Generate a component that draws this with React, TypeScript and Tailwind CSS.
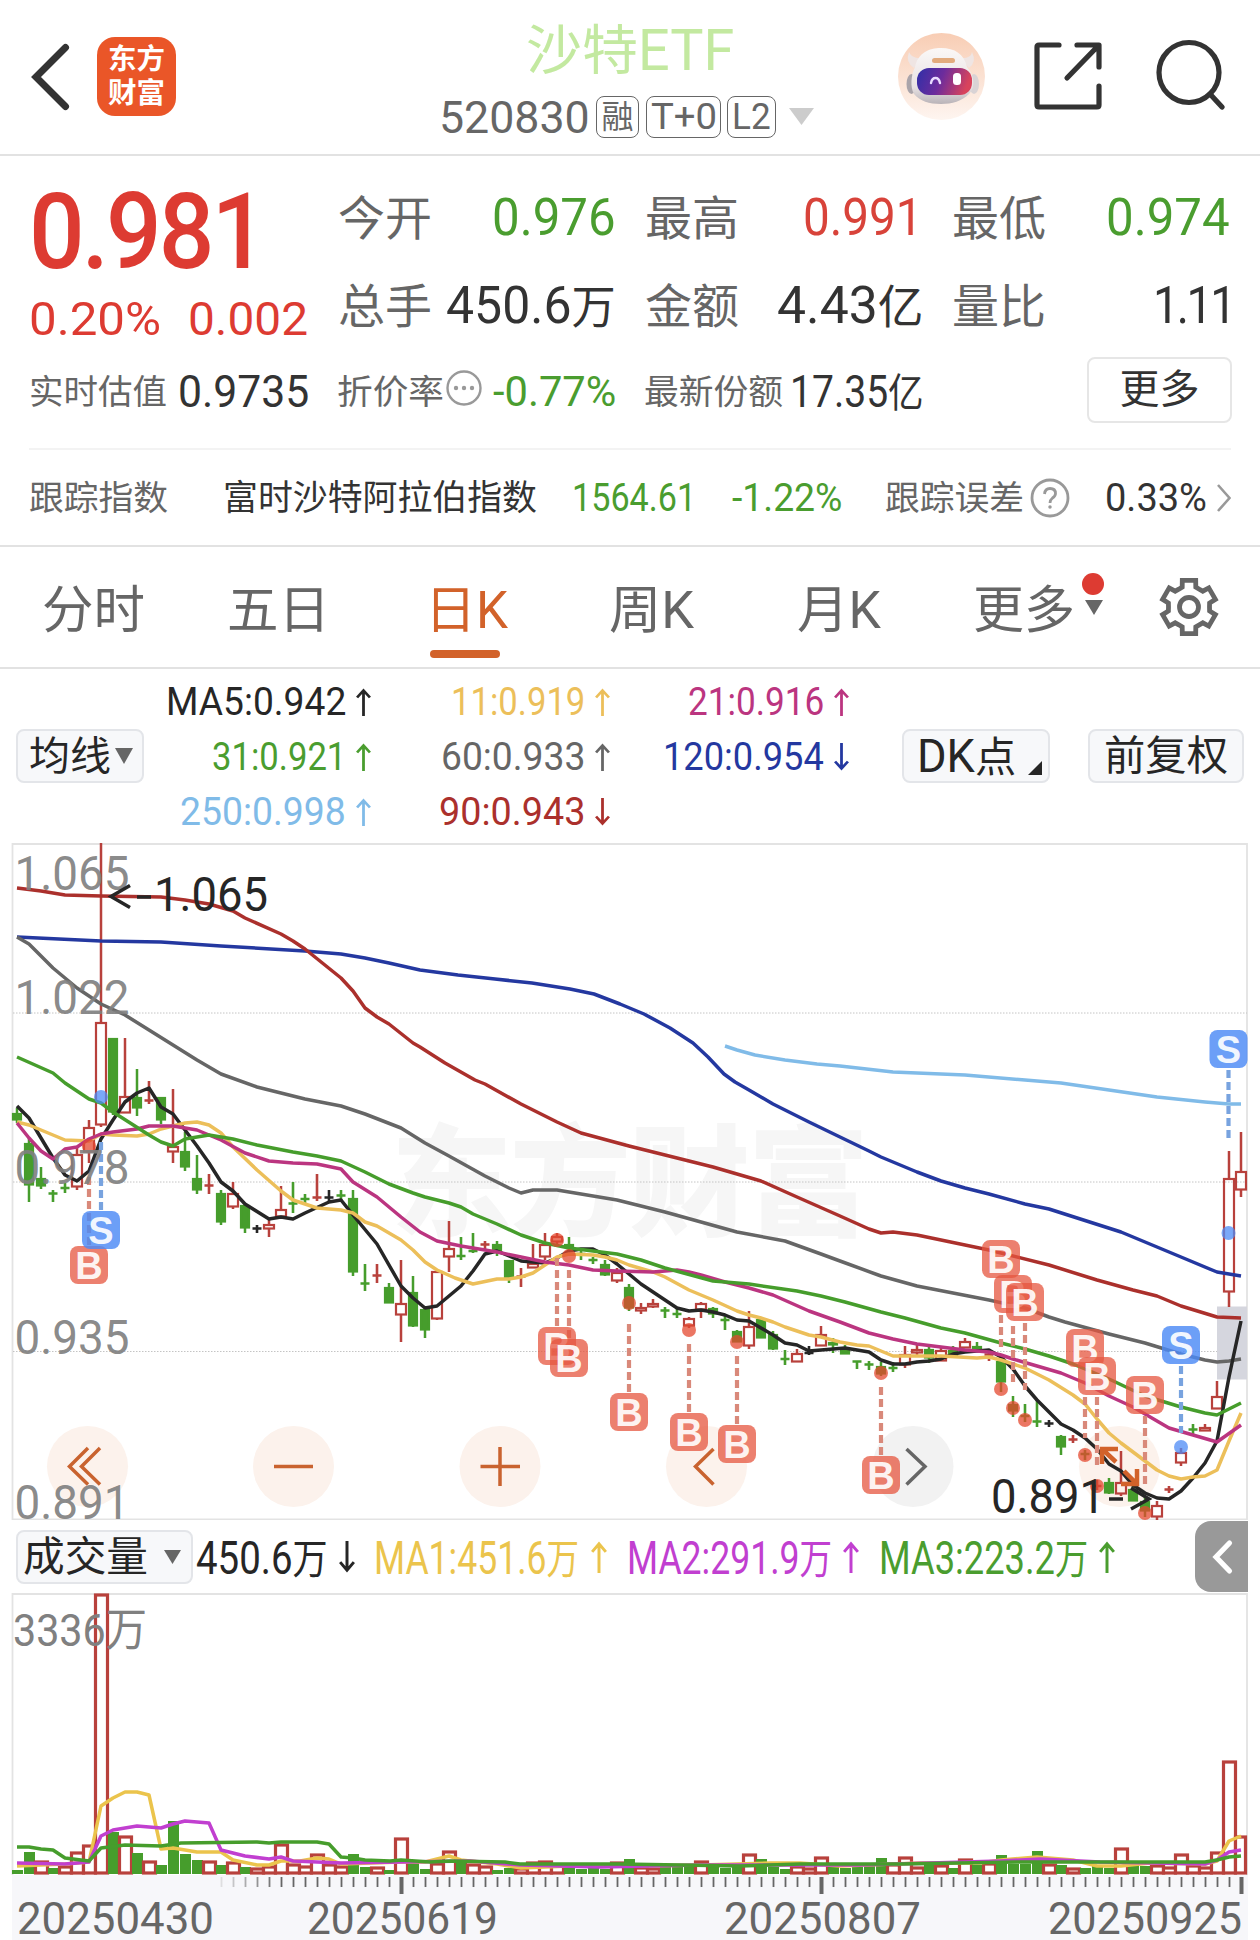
import { useLayoutEffect, useRef } from "react";
import type { ReactNode } from "react";
import clsx from "clsx";

const FONT = "font-['Roboto','Noto_Sans_CJK_SC',sans-serif]";

// Squeezes or stretches a line of text to the width of its box
const Fit = ({ className, children }: { className: string; children: ReactNode }) => {
  const ref = useRef<HTMLSpanElement>(null);

  useLayoutEffect(() => {
    const el = ref.current;
    if (!el || !el.parentElement) return;
    el.style.transform = `scaleX(${el.parentElement.clientWidth / el.offsetWidth})`;
  }, []);

  return (
    <span className={clsx("block shrink-0 whitespace-nowrap leading-none", className)}>
      <span ref={ref} className="inline-block origin-left">
        {children}
      </span>
    </span>
  );
};

const Triangle = ({ className }: { className: string }) => (
  <svg viewBox="0 0 10 8" preserveAspectRatio="none" className={clsx("shrink-0", className)}>
    <path d="M0 0H10L5 8Z" fill="currentColor" />
  </svg>
);

const Arrow = ({ down, className }: { down?: boolean; className?: string }) => (
  <svg
    viewBox="0 0 14 28"
    preserveAspectRatio="none"
    className={clsx("shrink-0", down && "rotate-180", className)}
    fill="none"
    stroke="currentColor"
    strokeWidth="2.6"
  >
    <path d="M7 28V2M1 9.500L7 2.500L13 9.500" />
  </svg>
);

const Robot = () => (
  <svg viewBox="0 0 87 87" className="size-[87px]">
    <defs>
      <linearGradient id="robotBg" x1="0" y1="0" x2="0" y2="1">
        <stop offset="0" stopColor="#f8cdb4" />
        <stop offset="1" stopColor="#fef5f0" />
      </linearGradient>
      <linearGradient id="robotHead" x1="0" y1="0" x2="0" y2="1">
        <stop offset="0" stopColor="#fbf8f7" />
        <stop offset="0.7" stopColor="#e8e2e3" />
        <stop offset="1" stopColor="#b9b3b8" />
      </linearGradient>
      <linearGradient id="robotVisor" x1="0" y1="0" x2="1" y2="0.2">
        <stop offset="0" stopColor="#2f2fa8" />
        <stop offset="0.5" stopColor="#6d2c9c" />
        <stop offset="1" stopColor="#d8435c" />
      </linearGradient>
    </defs>
    <circle cx="43.5" cy="43.5" r="43.5" fill="url(#robotBg)" />
    <path d="M11 19Q7 29 16 35L24 25Q14 26 11 19ZM74 19Q79 29 71 35L62 25Q73 26 74 19Z" fill="#efe5e3" />
    <ellipse cx="13.500" cy="51" rx="5" ry="10" fill="#aaa4aa" />
    <ellipse cx="76" cy="51" rx="5" ry="10" fill="#d9d3d5" />
    <path
      d="M17 34C20 20 31 15 43 15C57 15 66 21 69 34C76 42 78 54 71 61C64 68 54 71 43 71C31 71 22 68 16 61C12 54 13 42 17 34Z"
      fill="url(#robotHead)"
    />
    <rect x="34" y="25" width="23" height="5" rx="2.5" fill="#e2ab7e" />
    <rect x="19" y="35" width="55" height="27" rx="12" fill="url(#robotVisor)" />
    <path d="M33 50Q34 45 37.500 45Q41 45 42 50" fill="none" stroke="#e9dcff" strokeWidth="2.4" strokeLinecap="round" />
    <rect x="55" y="40" width="8" height="12" rx="3.500" fill="#fff" />
  </svg>
);

const gearPoints = Array.from({ length: 6 })
  .flatMap((_, i) =>
    [
      [-30, 20.5],
      [-19, 21],
      [-14, 27.5],
      [14, 27.5],
      [19, 21],
    ].map(([offset, r]) => {
      const a = ((i * 60 - 90 + offset) * Math.PI) / 180;
      return `${(30 + r * Math.cos(a)).toFixed(1)},${(30 + r * Math.sin(a)).toFixed(1)}`;
    })
  )
  .join(" ");

const Header = () => (
  <header className="flex h-[156px] border-b-2 border-[#e2e2e2]">
    <svg viewBox="0 0 40 68" className="mt-[43px] ml-[30px] h-[68px] w-10" fill="none" stroke="#333" strokeWidth="7">
      <path d="M35.500 4.500L6 34L35.500 63.500" strokeLinecap="round" />
    </svg>
    <div className="mt-[37px] ml-[27px] flex size-[79px] flex-col items-center justify-center rounded-[18px] bg-[#ea5628] text-[28.500px] leading-[34px] font-bold text-white">
      <span>东方</span>
      <span>财富</span>
    </div>
    <div className="ml-[263px] flex w-[380px] flex-col">
      <div className="mt-5 ml-[87px] flex h-[60px] items-center text-[#c3e9a0]">
        <Fit className="mt-1 w-[112px] text-[54px]">沙特</Fit>
        <Fit className="w-[96px] text-[58px]">ETF</Fit>
      </div>
      <div className="mt-[14px] flex h-[46px] items-center text-[#666]">
        <Fit className="w-[151px] text-[45px]">520830</Fit>
        <div className="ml-[6px] flex h-[42px] w-[43px] items-center justify-center rounded-[8px] border-[1.500px] border-[#666] text-[32px]">
          <Fit className="w-8">融</Fit>
        </div>
        <div className="ml-[7px] flex h-[42px] w-[75px] items-center justify-center rounded-[8px] border-[1.500px] border-[#666]">
          <Fit className="w-[66px] text-[36px]">T+0</Fit>
        </div>
        <div className="ml-[6px] flex h-[42px] w-[49px] items-center justify-center rounded-[8px] border-[1.500px] border-[#666]">
          <Fit className="w-[39px] text-[36px]">L2</Fit>
        </div>
        <Triangle className="-mt-0.5 ml-[13px] h-[17px] w-[25px] text-[#ccc]" />
      </div>
    </div>
    <div className="mt-[33px] ml-[79px]">
      <Robot />
    </div>
    <svg
      viewBox="0 0 68 68"
      className="mt-[42px] ml-[49px] size-[68px]"
      fill="none"
      stroke="#333"
      strokeWidth="5.200"
      strokeLinecap="round"
      strokeLinejoin="round"
    >
      <path d="M25 3H5Q3 3 3 5V63Q3 65 5 65H63Q65 65 65 63V44M43 3H65V25M64 4L33 36" />
    </svg>
    <svg viewBox="0 0 70 72" className="mt-[39px] ml-[53px] h-[72px] w-[70px]" fill="none" stroke="#333" strokeWidth="5.200">
      <circle cx="34" cy="33.500" r="30" />
      <path d="M55 55L67 68" strokeLinecap="round" />
    </svg>
  </header>
);

const Quote = () => (
  <section className="h-[391px] border-b-2 border-[#e2e2e2]">
    <div className="flex h-[194px]">
      <div className="ml-[29px] w-[309px] text-[#dd3b32]">
        <div className="flex h-[150px] items-center pt-0.5">
          <Fit className="w-[235px] text-[105px] font-medium tracking-[-0.03em]">0.981</Fit>
        </div>
        <div className="flex h-6 items-center gap-[27px] text-[47px]">
          <Fit className="w-[132px]">0.20%</Fit>
          <Fit className="w-[120px]">0.002</Fit>
        </div>
      </div>
      <div className="grid grid-cols-[278px_276px_276px] grid-rows-[88px_88px] gap-x-[31px] pt-[18px] text-[52px] text-[#333]">
        <div className="flex items-center justify-between text-[#4a9d2f]">
          <Fit className="w-[94px] text-[47px] text-[#666]">今开</Fit>
          <Fit className="w-[124px]">0.976</Fit>
        </div>
        <div className="-ml-0.5 flex items-center justify-between text-[#d8433a]">
          <Fit className="w-[94px] text-[47px] text-[#666]">最高</Fit>
          <Fit className="w-[120px]">0.991</Fit>
        </div>
        <div className="-ml-0.5 flex items-center justify-between text-[#4a9d2f]">
          <Fit className="w-[94px] text-[47px] text-[#666]">最低</Fit>
          <Fit className="w-[124px]">0.974</Fit>
        </div>
        <div className="flex items-center justify-between">
          <Fit className="w-[94px] text-[47px] text-[#666]">总手</Fit>
          <Fit className="w-[170px]">
            450.6<span className="text-[46px]">万</span>
          </Fit>
        </div>
        <div className="-ml-0.5 flex items-center justify-between">
          <Fit className="w-[94px] text-[47px] text-[#666]">金额</Fit>
          <Fit className="w-[146px]">
            4.43<span className="text-[46px]">亿</span>
          </Fit>
        </div>
        <div className="-mr-1 -ml-0.5 flex items-center justify-between">
          <Fit className="w-[94px] text-[47px] text-[#666]">量比</Fit>
          <Fit className="w-[81px] tracking-[-0.05em]">1.11</Fit>
        </div>
      </div>
    </div>
    <div className="flex h-[83px] items-center pt-px text-[#333]">
      <Fit className="ml-[29px] w-[138px] text-[34px] text-[#666]">实时估值</Fit>
      <Fit className="ml-[11px] w-[131px] text-[44px]">0.9735</Fit>
      <Fit className="ml-[28px] w-[107px] text-[34px] text-[#666]">折价率</Fit>
      <svg viewBox="0 0 36 36" className="ml-[2px] size-9 -translate-y-1" fill="#999">
        <circle cx="18" cy="18" r="16.500" fill="none" stroke="#999" strokeWidth="2.400" />
        <circle cx="10" cy="18" r="2.200" />
        <circle cx="18" cy="18" r="2.200" />
        <circle cx="26" cy="18" r="2.200" />
      </svg>
      <Fit className="ml-[11px] w-[123px] text-[42px] text-[#4a9d2f]">-0.77%</Fit>
      <Fit className="ml-7 w-[139px] text-[34px] text-[#666]">最新份额</Fit>
      <Fit className="ml-[7px] w-[134px] text-[44px]">
        17.35<span className="text-[40px]">亿</span>
      </Fit>
      <div className="-mt-1 mr-7 ml-auto flex h-[66px] w-[145px] items-center justify-center rounded-[8px] border-2 border-[#e6e6e6]">
        <Fit className="w-20 text-[40px]">更多</Fit>
      </div>
    </div>
    <div className="mx-[29px] mt-[15px] h-0.5 bg-[#f3f3f3]" />
    <div className="flex h-24 items-center text-[38px] text-[#333]">
      <Fit className="ml-[29px] w-[139px] text-[34px] text-[#666]">跟踪指数</Fit>
      <Fit className="ml-[55px] w-[314px] text-[35px]">富时沙特阿拉伯指数</Fit>
      <Fit className="ml-[35px] w-[124px] text-[#4a9d2f]">1564.61</Fit>
      <Fit className="ml-[36px] w-[110px] text-[#4a9d2f]">-1.22%</Fit>
      <Fit className="ml-[43px] w-[139px] text-[34px] text-[#666]">跟踪误差</Fit>
      <svg viewBox="0 0 40 40" className="ml-[6px] size-10" fill="none" stroke="#999" strokeWidth="2.800">
        <circle cx="20" cy="20" r="18" />
        <path d="M14.500 16Q15 10.500 20 10.500Q25.500 10.500 25.500 15.500Q25.500 18 22.500 20Q20 22 20 25" />
        <circle cx="20" cy="29" r="1" fill="#999" strokeWidth="1.500" />
      </svg>
      <Fit className="ml-[35px] w-[102px]">0.33%</Fit>
      <svg viewBox="0 0 14 30" className="ml-[10px] h-[30px] w-3.5" fill="none" stroke="#999" strokeWidth="2.600">
        <path d="M1 2L12.500 15L1 28" />
      </svg>
    </div>
  </section>
);

const Tabs = () => (
  <nav className="flex h-[122px] items-center border-b-2 border-[#e2e2e2] pt-1.5 text-[51px] text-[#666]">
    <Fit className="ml-[42px] w-[103px]">分时</Fit>
    <Fit className="ml-[82px] w-[103px]">五日</Fit>
    <div className="relative ml-[95px] text-[#d2622a]">
      <Fit className="w-[83px]">日K</Fit>
      <div className="absolute top-[65px] left-[5px] h-2 w-[70px] rounded-full bg-[#d2622a]" />
    </div>
    <Fit className="ml-[101px] w-[85px]">周K</Fit>
    <Fit className="ml-[103px] w-[84px]">月K</Fit>
    <div className="relative ml-[92px] flex items-center">
      <Fit className="w-[102px]">更多</Fit>
      <Triangle className="-mt-1.5 ml-2.5 h-[15px] w-[18px]" />
      <div className="absolute -top-3 left-[109px] size-[22px] rounded-full bg-[#dd3b32]" />
    </div>
    <svg viewBox="0 0 60 60" className="ml-[56px] size-[60px] -translate-y-[3px]" fill="none" stroke="#666" strokeWidth="4.800">
      <polygon points={gearPoints} />
      <circle cx="30" cy="30" r="9.500" />
    </svg>
  </nav>
);

const averages = [
  { text: "MA5:0.942", width: "w-[180px]", color: "text-[#262626]" },
  { text: "11:0.919", width: "w-[134px]", color: "text-[#ecbf5a]" },
  { text: "21:0.916", width: "w-[136px]", color: "text-[#bb3580]" },
  { text: "31:0.921", width: "w-[134px]", color: "text-[#4a9d2f]" },
  { text: "60:0.933", width: "w-[144px]", color: "text-[#666]" },
  { text: "120:0.954", width: "w-[161px]", color: "text-[#2438a0]", down: true },
  { text: "250:0.998", width: "w-[166px]", color: "text-[#80bbe8]" },
  { text: "90:0.943", width: "w-[146px]", color: "text-[#ab302c]", down: true },
];

const Averages = () => (
  <section className="flex h-[174px] items-center text-[#262626]">
    <div className="ml-4 flex h-[54px] w-32 items-center rounded-[8px] border-2 border-[#e3e5e9] bg-[#f7f8fa]">
      <Fit className="mt-px ml-[11px] w-[82px] text-[40px]">均线</Fit>
      <Triangle className="ml-1 h-4 w-[18px] text-[#666]" />
    </div>
    <div className="grid h-[168px] grid-cols-[227px_239px_239px] pt-0.5 text-[38px]">
      {averages.map(({ text, width, color, down }) => (
        <div key={text} className={clsx("flex items-center justify-end gap-2.5", color)}>
          <Fit className={width}>{text}</Fit>
          <Arrow down={down} className="h-7 w-[15px]" />
        </div>
      ))}
    </div>
    <div className="ml-[53px] flex h-[54px] w-[148px] items-center rounded-[8px] border-2 border-[#e3e5e9] bg-[#f7f8fa]">
      <Fit className="ml-[13px] w-[99px] text-[42px]">
        <span className="text-[46px]">DK</span>点
      </Fit>
      <svg viewBox="0 0 14 14" className="mt-6 ml-[12px] size-3.5">
        <path d="M14 0V14H0Z" fill="#262626" />
      </svg>
    </div>
    <div className="ml-[38px] flex h-[54px] w-[156px] items-center justify-center rounded-[8px] border-2 border-[#e3e5e9] bg-[#f7f8fa]">
      <Fit className="w-[124px] text-[41px]">前复权</Fit>
    </div>
  </section>
);

type Kind = "R" | "G" | "K";

const colors: Record<Kind, string> = { R: "#b8413c", G: "#469d2c", K: "#262626" };

const xOf = (i: number) => 17 + i * 12;

// kind, high, body top, body bottom, low
const candles: [Kind, number, number, number, number][] = [
  ["G", 1108, 1113, 1120, 1123],
  ["G", 1137, 1143, 1185, 1202],
  ["G", 1167, 1178, 1186, 1189],
  ["G", 1190, 1193, 1194, 1202],
  ["G", 1183, 1187, 1189, 1193],
  ["R", 1148, 1154, 1187, 1190],
  ["R", 1120, 1127, 1152, 1163],
  ["R", 843, 1022, 1125, 1127],
  ["G", 1038, 1038, 1112, 1115],
  ["R", 1038, 1096, 1113, 1113],
  ["G", 1069, 1097, 1108, 1116],
  ["R", 1081, 1100, 1101, 1104],
  ["G", 1097, 1097, 1120, 1124],
  ["R", 1089, 1146, 1152, 1163],
  ["G", 1132, 1151, 1167, 1171],
  ["G", 1155, 1178, 1190, 1194],
  ["R", 1174, 1185, 1186, 1194],
  ["G", 1190, 1193, 1222, 1225],
  ["R", 1182, 1193, 1207, 1209],
  ["G", 1204, 1205, 1228, 1233],
  ["K", 1225, 1228, 1229, 1233],
  ["R", 1220, 1224, 1229, 1237],
  ["R", 1186, 1209, 1217, 1217],
  ["G", 1182, 1203, 1204, 1213],
  ["G", 1194, 1198, 1200, 1205],
  ["R", 1174, 1197, 1198, 1201],
  ["K", 1190, 1197, 1198, 1202],
  ["G", 1190, 1195, 1196, 1200],
  ["G", 1190, 1198, 1272, 1276],
  ["G", 1264, 1283, 1284, 1291],
  ["R", 1264, 1275, 1276, 1283],
  ["G", 1283, 1287, 1303, 1303],
  ["R", 1260, 1303, 1315, 1342],
  ["G", 1276, 1292, 1326, 1327],
  ["G", 1307, 1309, 1330, 1338],
  ["R", 1271, 1271, 1319, 1320],
  ["R", 1221, 1248, 1257, 1272],
  ["G", 1237, 1255, 1257, 1260],
  ["G", 1233, 1250, 1252, 1253],
  ["R", 1241, 1244, 1245, 1250],
  ["G", 1241, 1244, 1251, 1256],
  ["G", 1260, 1260, 1278, 1283],
  ["R", 1268, 1276, 1277, 1287],
  ["R", 1244, 1263, 1268, 1268],
  ["R", 1233, 1244, 1257, 1260],
  ["R", 1233, 1236, 1242, 1245],
  ["G", 1237, 1244, 1247, 1253],
  ["G", 1250, 1253, 1255, 1260],
  ["G", 1257, 1259, 1261, 1264],
  ["G", 1260, 1264, 1275, 1276],
  ["R", 1268, 1272, 1281, 1283],
  ["G", 1284, 1287, 1308, 1311],
  ["R", 1303, 1307, 1311, 1314],
  ["R", 1299, 1303, 1307, 1308],
  ["G", 1307, 1310, 1311, 1318],
  ["G", 1309, 1313, 1315, 1318],
  ["R", 1317, 1318, 1326, 1328],
  ["R", 1302, 1303, 1310, 1318],
  ["G", 1307, 1308, 1314, 1318],
  ["G", 1316, 1319, 1321, 1330],
  ["G", 1330, 1331, 1342, 1342],
  ["R", 1311, 1326, 1346, 1349],
  ["G", 1318, 1319, 1338, 1338],
  ["G", 1331, 1334, 1349, 1350],
  ["G", 1350, 1358, 1360, 1365],
  ["R", 1349, 1353, 1362, 1362],
  ["K", 1346, 1352, 1354, 1355],
  ["R", 1326, 1334, 1346, 1346],
  ["G", 1338, 1342, 1345, 1353],
  ["G", 1345, 1348, 1354, 1354],
  ["G", 1361, 1361, 1362, 1369],
  ["G", 1361, 1364, 1365, 1370],
  ["G", 1362, 1366, 1374, 1376],
  ["G", 1362, 1367, 1369, 1372],
  ["R", 1346, 1354, 1365, 1368],
  ["R", 1344, 1349, 1353, 1356],
  ["G", 1347, 1349, 1358, 1363],
  ["R", 1348, 1350, 1361, 1361],
  ["G", 1346, 1350, 1356, 1357],
  ["R", 1338, 1341, 1348, 1348],
  ["G", 1342, 1346, 1349, 1352],
  ["R", 1351, 1354, 1355, 1361],
  ["G", 1358, 1361, 1382, 1392],
  ["G", 1396, 1404, 1411, 1417],
  ["G", 1404, 1415, 1417, 1422],
  ["G", 1400, 1421, 1422, 1427],
  ["K", 1420, 1423, 1424, 1427],
  ["G", 1435, 1436, 1447, 1455],
  ["R", 1435, 1439, 1440, 1443],
  ["G", 1450, 1453, 1455, 1460],
  ["R", 1480, 1485, 1487, 1490],
  ["G", 1478, 1482, 1493, 1494],
  ["R", 1451, 1482, 1494, 1496],
  ["G", 1486, 1489, 1501, 1501],
  ["G", 1496, 1501, 1511, 1517],
  ["R", 1501, 1505, 1517, 1521],
  ["R", 1486, 1489, 1490, 1493],
  ["R", 1448, 1452, 1463, 1466],
  ["G", 1424, 1429, 1430, 1436],
  ["R", 1424, 1427, 1431, 1431],
  ["R", 1381, 1396, 1409, 1409],
  ["R", 1151, 1178, 1292, 1307],
  ["R", 1132, 1171, 1190, 1197],
];

const priceLines = [
  {
    color: "#80bbe8",
    points: "725,1046 737,1050 755,1055 785,1060 817,1064 840,1066 893,1072 965,1075 1025,1080 1061,1083 1109,1090 1157,1097 1205,1102 1229,1104 1241,1104",
  },
  {
    color: "#2438a0",
    points: "17,937 101,941 161,942 221,946 305,951 341,954 365,958 389,963 420,970 458,975 495,979 532,983 570,989 594,994 620,1004 644,1014 670,1028 693,1043 708,1057 724,1074 735,1082 749,1090 773,1104 809,1122 840,1137 869,1151 881,1157 917,1172 941,1181 965,1188 989,1194 1025,1204 1049,1209 1121,1232 1157,1247 1181,1257 1217,1272 1229,1274 1241,1276",
  },
  {
    color: "#ab302c",
    points: "17,888 41,891 65,895 101,896 161,897 185,900 209,904 233,911 245,918 281,934 293,941 305,949 341,978 353,991 365,1008 377,1017 389,1024 413,1043 420,1047 445,1063 475,1080 485,1084 521,1104 557,1122 581,1133 629,1146 665,1155 689,1161 713,1167 761,1181 797,1197 840,1216 869,1229 881,1233 893,1232 917,1235 965,1245 989,1250 1001,1253 1049,1265 1097,1280 1133,1290 1157,1296 1181,1306 1217,1317 1241,1318",
  },
  {
    color: "#666",
    points: "17,937 29,944 41,956 53,968 65,978 77,988 101,1004 125,1015 149,1030 173,1045 197,1060 221,1074 257,1087 305,1099 341,1106 365,1114 401,1128 425,1143 449,1156 485,1176 509,1188 521,1193 533,1190 557,1190 581,1194 617,1200 665,1212 737,1232 785,1241 821,1254 840,1261 881,1276 917,1286 953,1293 989,1300 1025,1308 1049,1317 1065,1322 1109,1334 1145,1343 1181,1354 1205,1360 1217,1362 1229,1361 1241,1359",
  },
  {
    color: "#262626",
    points: "17,1106 29,1118 41,1138 53,1158 65,1175 77,1181 89,1171 101,1139 113,1120 125,1102 137,1093 149,1088 161,1107 173,1114 185,1130 197,1146 209,1163 221,1182 233,1191 245,1204 269,1219 281,1217 293,1219 305,1213 329,1202 341,1200 353,1215 377,1244 401,1286 413,1298 425,1308 437,1306 461,1286 473,1271 485,1254 497,1251 509,1256 521,1261 545,1263 557,1258 569,1251 581,1249 593,1249 605,1255 617,1264 629,1274 641,1284 653,1292 665,1300 677,1308 689,1311 701,1310 713,1312 725,1315 737,1320 749,1321 761,1328 773,1335 785,1343 797,1345 809,1351 821,1350 845,1348 857,1350 869,1352 881,1360 893,1364 905,1364 917,1362 929,1361 941,1359 953,1354 965,1352 977,1351 989,1350 1001,1357 1013,1369 1025,1386 1037,1400 1049,1412 1061,1424 1073,1430 1085,1438 1097,1449 1109,1464 1121,1471 1133,1485 1145,1493 1157,1498 1169,1499 1181,1491 1193,1478 1205,1463 1217,1441 1229,1377 1241,1321",
  },
  {
    color: "#ecbf5a",
    points: "17,1122 29,1125 41,1130 53,1135 65,1140 89,1141 101,1134 113,1135 137,1136 149,1134 161,1129 173,1126 185,1123 197,1122 209,1125 221,1133 233,1147 257,1170 281,1191 293,1200 305,1204 317,1208 341,1210 353,1213 365,1222 377,1226 401,1240 413,1250 425,1262 437,1270 455,1278 473,1284 497,1279 509,1279 521,1277 533,1273 545,1265 557,1257 569,1254 593,1255 605,1257 617,1260 629,1265 653,1272 665,1277 689,1290 713,1300 737,1311 749,1315 761,1318 773,1322 785,1327 809,1335 821,1337 840,1342 857,1345 869,1346 881,1351 893,1356 917,1356 941,1356 977,1358 989,1357 1001,1360 1013,1364 1025,1368 1049,1380 1073,1395 1085,1404 1097,1419 1109,1433 1121,1443 1133,1452 1145,1461 1157,1470 1169,1476 1181,1479 1193,1477 1205,1476 1217,1470 1229,1441 1241,1413",
  },
  {
    color: "#bb3580",
    points: "17,1123 29,1138 41,1151 53,1159 65,1149 77,1147 89,1139 101,1134 113,1132 137,1129 149,1126 173,1126 185,1128 197,1130 221,1140 245,1153 269,1161 293,1163 317,1164 341,1169 353,1182 377,1197 401,1217 420,1232 437,1241 461,1246 485,1250 497,1252 521,1257 545,1262 569,1265 593,1270 617,1271 653,1272 677,1270 689,1272 701,1275 725,1282 749,1288 773,1295 809,1311 840,1322 869,1333 893,1339 917,1344 941,1347 965,1350 989,1352 1001,1355 1013,1359 1037,1366 1061,1373 1085,1383 1109,1396 1133,1407 1169,1428 1193,1435 1217,1442 1241,1425",
  },
  {
    color: "#469d2c",
    points: "17,1057 53,1073 65,1083 89,1099 101,1103 113,1112 149,1135 161,1142 173,1146 185,1139 209,1135 233,1139 257,1145 293,1152 317,1156 341,1161 365,1172 389,1184 413,1193 425,1197 449,1203 461,1207 473,1214 497,1224 521,1235 545,1243 569,1248 593,1251 617,1254 641,1260 665,1268 713,1281 749,1284 797,1291 821,1296 845,1302 881,1312 905,1318 941,1328 965,1333 1001,1343 1025,1349 1049,1356 1073,1364 1109,1379 1145,1396 1181,1407 1205,1413 1217,1415 1229,1409 1241,1403",
  },
];

// letter, x, badge centre, dash from, dash to, dot
const trades: ["B" | "S", number, number, number, number, number][] = [
  ["B", 89, 1265, 1177, 1246, 1146],
  ["S", 101, 1230, 1142, 1211, 1097],
  ["B", 557, 1346, 1258, 1326, 1240],
  ["B", 569, 1358, 1270, 1338, 1256],
  ["B", 629, 1412, 1324, 1392, 1303],
  ["B", 689, 1432, 1344, 1412, 1330],
  ["B", 737, 1444, 1356, 1424, 1342],
  ["B", 881, 1475, 1387, 1455, 1373],
  ["B", 1001, 1259, 1315, 1348, 1389],
  ["B", 1013, 1294, 1326, 1382, 1408],
  ["B", 1025, 1302, 1323, 1390, 1420],
  ["B", 1085, 1348, 1397, 1438, 1455],
  ["B", 1097, 1376, 1397, 1465, 1486],
  ["B", 1145, 1395, 1416, 1484, 1513],
  ["S", 1181, 1345, 1366, 1433, 1447],
  ["S", 1228.5, 1049, 1070, 1138, 1233],
];

const scale = [
  ["1.065", 890],
  ["1.022", 1014],
  ["0.978", 1184],
  ["0.935", 1354],
  ["0.891", 1518.5],
] as const;

const Candle = ({ index }: { index: number }) => {
  const [kind, high, top, bottom, low] = candles[index];
  const x = xOf(index);
  const color = colors[kind];

  if (bottom - top < 3) {
    return (
      <path d={`M${x} ${high}V${low}M${x - 4.5} ${(top + bottom) / 2}H${x + 4.5}`} stroke={color} strokeWidth="2.600" />
    );
  }
  return (
    <g stroke={color} strokeWidth="2.200">
      <path d={`M${x} ${high}V${top}M${x} ${bottom}V${low}`} strokeWidth="2.500" />
      <rect
        x={x - 4 + (kind === "R" ? -1 : 0)}
        y={top + 1}
        width={kind === "R" ? 10 : 8}
        height={bottom - top - 1.5}
        fill={kind === "R" ? "none" : color}
      />
    </g>
  );
};

const PriceChart = () => (
  <svg viewBox="0 843 1260 677" className={clsx("block h-[677px] w-full", FONT)}>
    <text x="391" y="1226" fontSize="121" fontWeight="900" fill="#f6f6f6" textLength="478">
      东方财富
    </text>
    <path d="M12.500 844H1247V1519.500H12.500Z" fill="none" stroke="#e3e3e3" strokeWidth="1.800" />
    <path d="M13 1013H1247M13 1182H1247M13 1351.500H1247" stroke="#c4c4c4" strokeWidth="1" strokeDasharray="1.500 1.500" />
    <rect x="1217" y="1306.500" width="30" height="73" fill="#d5d6de" />

    {[87.5, 293.5, 500, 706.5, 913, 1119.5].map((cx) => (
      <circle key={cx} cx={cx} cy="1466.500" r="40.500" fill={cx === 913 ? "#f2f2f2" : "#fcf2ec"} />
    ))}
    <g fill="none" stroke="#c9632f" strokeWidth="3.500">
      <path d="M88 1448L69.500 1466.500L88 1484.500M100 1448L81.500 1466.500L100 1484.500" />
      <path d="M274 1466.500H313" />
      <path d="M480.500 1466.500H520M500 1447V1486" />
      <path d="M713.500 1449L695.500 1466.500L713.500 1484.500" />
      <path d="M906.500 1449L925 1466.500L906.500 1484.500" stroke="#666" />
    </g>

    {candles.map((_, i) => (
      <Candle key={i} index={i} />
    ))}
    {priceLines.map(({ color, points }) => (
      <polyline key={color} points={points} fill="none" stroke={color} strokeWidth="3.500" strokeLinejoin="round" />
    ))}

    <g fill="none" stroke="#d2622a" strokeWidth="4.500">
      <path d="M1116 1462L1102 1449M1102 1464V1449H1118M1124 1471L1137 1484M1137 1469V1484H1121" />
    </g>

    {trades.map(([letter, x, y, from, to, dot]) => (
      <g key={`${x}-${y}`}>
        <path
          d={`M${x} ${from}V${to}`}
          stroke={letter === "B" ? "#d9897a" : "#78a3df"}
          strokeWidth="4.200"
          strokeDasharray="8 4"
        />
        <circle cx={x} cy={dot} r="7" fill={letter === "B" ? "#e4482f" : "#4e8bf5"} fillOpacity="0.75" />
      </g>
    ))}
    {trades.map(([letter, x, y]) => (
      <g key={`${x}-${y}`}>
        <rect
          x={x - 19}
          y={y - 19}
          width="38"
          height="38"
          rx="8"
          fill={letter === "B" ? "#e6553f" : "#4c8af5"}
          fillOpacity={letter === "B" ? 0.75 : 0.82}
        />
        <text
          x={x}
          y={y + 13.5}
          fontSize="38"
          fontWeight="700"
          fontFamily="Liberation Sans"
          textAnchor="middle"
          fill="#fff"
          fillOpacity="0.92"
        >
          {letter}
        </text>
      </g>
    ))}

    <g fill="#808080" fontSize="48">
      {scale.map(([text, y]) => (
        <text key={text} x="14.500" y={y} textLength="115" lengthAdjust="spacingAndGlyphs" fillOpacity="0.92">
          {text}
        </text>
      ))}
    </g>
    <g fill="#262626" fontSize="48">
      <text x="154" y="911" textLength="114" lengthAdjust="spacingAndGlyphs">
        1.065
      </text>
      <text x="991" y="1512.500" textLength="114" lengthAdjust="spacingAndGlyphs">
        0.891
      </text>
    </g>
    <g fill="none" stroke="#262626" strokeWidth="3.500">
      <path d="M130 885.500L111 896.500L130 907.500M137 897H151" />
      <path d="M1131 1488L1149 1499L1131 1509M1109 1499H1123" />
    </g>
  </svg>
);

const VolumeHeader = () => (
  <div className="flex h-[73px] items-center text-[46px] text-[#262626]">
    <div className="ml-4 flex h-[54px] w-[177px] items-center rounded-[8px] border-2 border-[#e3e5e9] bg-[#f7f8fa]">
      <Fit className="mt-px ml-[5px] w-[125px] text-[41px]">成交量</Fit>
      <Triangle className="ml-4 h-[14px] w-[17px] text-[#666]" />
    </div>
    <Fit className="mt-0.5 ml-[3px] w-[132px]">
      450.6<span className="text-[42px]">万</span>
    </Fit>
    <Arrow down className="ml-[11px] h-8 w-4" />
    <Fit className="mt-0.5 ml-[19px] w-[205px] text-[#ebc44c]">
      MA1:451.6<span className="text-[42px]">万</span>
    </Fit>
    <Arrow className="ml-3 h-8 w-4 text-[#ebc44c]" />
    <Fit className="mt-0.5 ml-5 w-[205px] text-[#c13fd0]">
      MA2:291.9<span className="text-[42px]">万</span>
    </Fit>
    <Arrow className="ml-[11px] h-8 w-4 text-[#c13fd0]" />
    <Fit className="mt-0.5 ml-[20px] w-[209px] text-[#4a9d2f]">
      MA3:223.2<span className="text-[42px]">万</span>
    </Fit>
    <Arrow className="ml-[11px] h-8 w-4 text-[#4a9d2f]" />
    <div className="mr-3 ml-auto flex h-[71px] w-[53px] items-center rounded-l-[16px] bg-[#999] pl-4">
      <svg viewBox="0 0 24 36" className="h-9 w-6" fill="none" stroke="#fff" strokeWidth="5.200" strokeLinecap="round">
        <path d="M18.500 4L5 18L18.500 32" />
      </svg>
    </div>
  </div>
);

const volumes = [
  4, 22, 13, 6, 8, 22, 29, 280, 42, 38, 21, 13, 9, 53, 20, 14, 13, 9, 12, 7, 6, 8, 30, 10, 8, 20, 10, 8, 20, 7, 7, 4,
  36, 12, 5, 11, 23, 13, 10, 8, 4, 6, 6, 12, 13, 9, 8, 5, 7, 5, 12, 15, 7, 6, 7, 8, 9, 13, 9, 6, 7, 20, 15, 7, 5, 8, 6,
  17, 9, 6, 7, 8, 16, 10, 17, 7, 10, 9, 6, 15, 9, 11, 19, 10, 10, 23, 10, 9, 6, 6, 8, 6, 26, 9, 8, 9, 7, 20, 9, 7, 22,
  113, 38,
];

const volumeKinds =
  "GGRGRRRRGRGRGGGGRGRGRRRRRRRRGGRGRGGRRGRRGGRRRRGGGGRGRRGGGRGGGRGGGRRRGGGGGRRRGRGRGRGGGGRGRGGGRGGRRRRRRRR";

const volumeLines = [
  {
    color: "#ebc44c",
    points: "17,1866 41,1865 65,1864 89,1862 101,1806 113,1798 125,1792 137,1792 149,1795 161,1849 173,1848 197,1852 221,1852 233,1860 257,1865 269,1865 281,1861 300,1861 317,1858 329,1859 341,1864 401,1862 425,1862 449,1856 461,1860 497,1864 521,1868 570,1866 640,1866 700,1865 770,1863 800,1863 840,1866 920,1863 980,1863 1001,1860 1037,1857 1073,1860 1097,1866 1121,1866 1150,1863 1205,1864 1217,1861 1229,1841 1241,1836",
  },
  {
    color: "#c13fd0",
    points: "17,1863 65,1864 89,1862 101,1836 113,1830 137,1826 161,1828 173,1824 185,1821 197,1822 209,1823 221,1850 233,1853 245,1856 269,1859 281,1857 293,1861 341,1863 401,1862 470,1861 520,1865 600,1867 700,1865 860,1865 930,1863 1000,1861 1040,1859 1100,1862 1205,1864 1217,1860 1229,1852 1241,1850",
  },
  {
    color: "#469d2c",
    points: "17,1847 29,1847 41,1849 53,1850 65,1858 89,1861 101,1848 125,1845 161,1846 181,1843 257,1842 269,1843 281,1842 317,1842 329,1844 341,1857 353,1858 365,1860 390,1861 401,1860 430,1862 450,1861 505,1862 520,1864 620,1864 740,1866 800,1864 900,1864 1020,1862 1205,1862 1217,1860 1229,1857 1241,1856",
  },
];

const dates = [
  ["20250430", 17, 197],
  ["20250619", 307, 191],
  ["20250807", 724, 197],
  ["20250925", 1048, 194],
] as const;

const VolumeChart = () => (
  <svg viewBox="0 1593 1260 347" className={clsx("block h-[347px] w-full", FONT)}>
    <rect x="12" y="1875" width="1236" height="65" fill="#f7f7fa" />
    <path d="M12.500 1875V1594H1247V1875" fill="none" stroke="#e3e3e3" strokeWidth="1.800" />
    {volumes.map((h, i) => {
      const x = xOf(i);
      return volumeKinds[i] === "R" ? (
        <rect
          key={i}
          x={x - 5.5}
          y={1875 - h}
          width={i === 102 ? 10 : 12}
          height={h - 2}
          fill="#fff"
          stroke={colors.R}
          strokeWidth="3.200"
        />
      ) : (
        <rect key={i} x={x - 5} y={1874 - h} width="11" height={h} fill={colors.G} />
      );
    })}
    {volumeLines.map(({ color, points }) => (
      <polyline key={color} points={points} fill="none" stroke={color} strokeWidth="3.500" strokeLinejoin="round" />
    ))}
    <text x="13" y="1645.500" fontSize="45" fill="#808080" textLength="134" lengthAdjust="spacingAndGlyphs">
      3336万
    </text>
    {Array.from({ length: 86 }, (_, i) => {
      const major = i === 15 || i === 50 || i === 85;
      return (
        <path
          key={i}
          d={`M${221.5 + i * 12} 1877V${major ? 1894 : 1887}`}
          stroke="#666"
          strokeWidth={major ? 4 : 1.8}
          opacity={Math.min(1, (i + 1) * 0.17)}
        />
      );
    })}
    {dates.map(([text, x, width]) => (
      <text key={text} x={x} y="1934" fontSize="45" fill="#666" textLength={width} lengthAdjust="spacingAndGlyphs">
        {text}
      </text>
    ))}
  </svg>
);

const App = () => {
  return (
    <main className={clsx("h-[1940px] w-[1260px] overflow-hidden bg-white", FONT)}>
      <Header />
      <Quote />
      <Tabs />
      <Averages />
      <PriceChart />
      <VolumeHeader />
      <VolumeChart />
    </main>
  );
};

export default App;
